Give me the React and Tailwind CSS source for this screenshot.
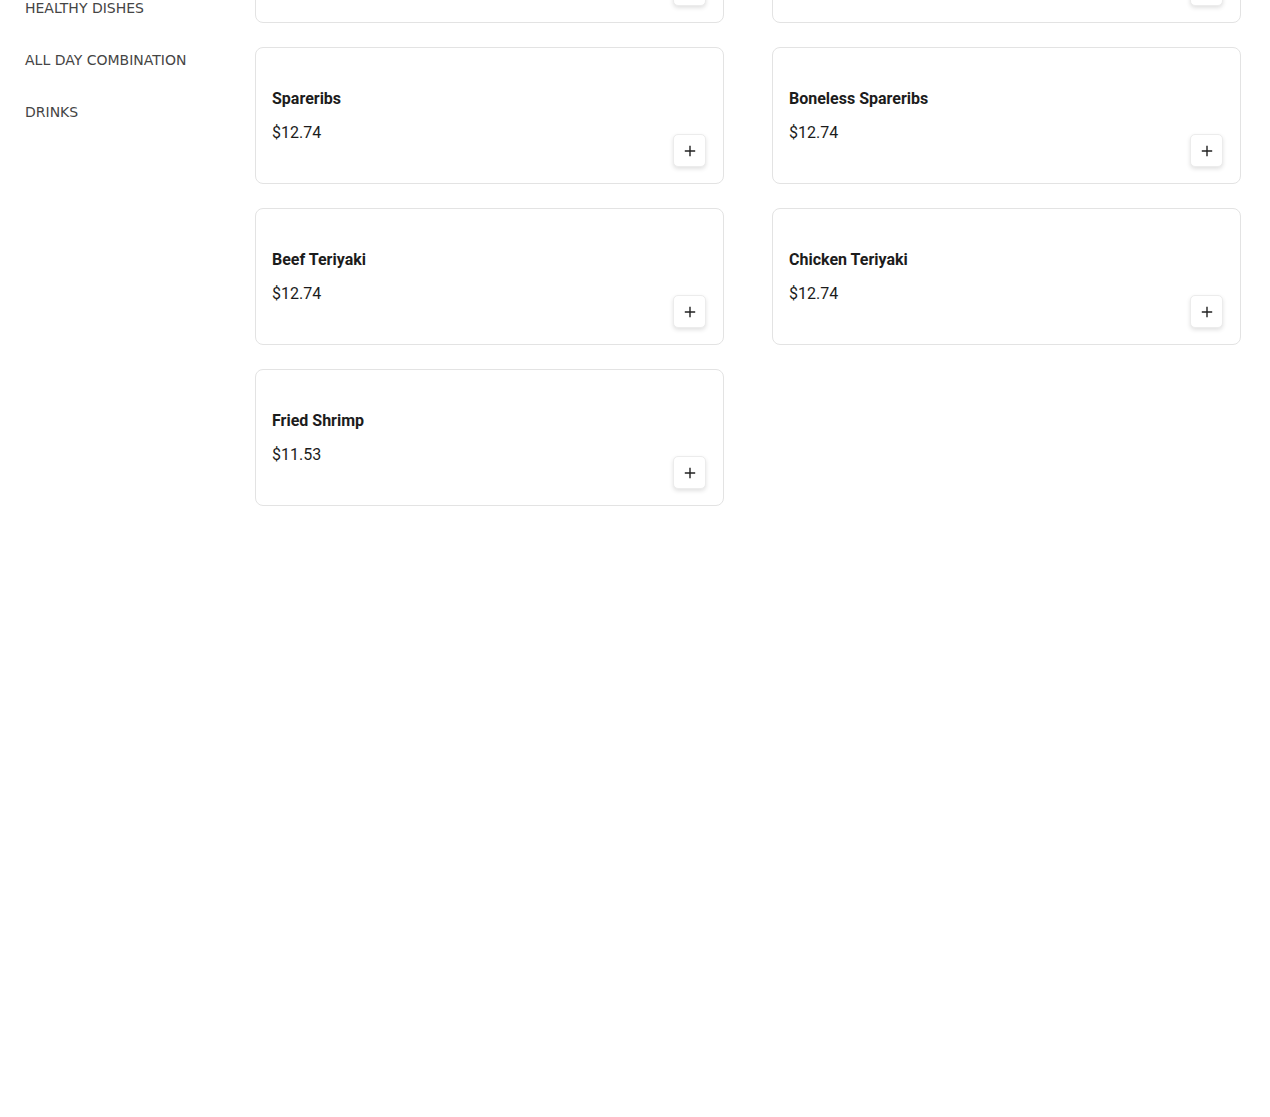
import React from "react";

const categories = ["HEALTHY DISHES", "ALL DAY COMBINATION", "DRINKS"];

const items = [
  { name: "Shrimp with Broccoli", price: "$12.74" },
  { name: "Chicken with Broccoli", price: "$12.74" },
  { name: "Spareribs", price: "$12.74" },
  { name: "Boneless Spareribs", price: "$12.74" },
  { name: "Beef Teriyaki", price: "$12.74" },
  { name: "Chicken Teriyaki", price: "$12.74" },
  { name: "Fried Shrimp", price: "$11.53" },
];

function PlusIcon() {
  return (
    <svg width="12" height="12" viewBox="0 0 12 12" fill="none" stroke="#222" strokeWidth="1.4" strokeLinecap="square">
      <path d="M6 1.5v9M1.5 6h9" />
    </svg>
  );
}

function ItemCard({ name, price }) {
  return (
    <div className="flex h-[137px] justify-between rounded-[8px] border border-[#e3e3e3] bg-white p-4">
      <div className="flex flex-col pt-[23px]">
        <div className="text-[16px] font-bold leading-6 text-[#1c1c1c]">{name}</div>
        <div className="mt-[10px] text-[16px] leading-6 text-[#1c1c1c]">{price}</div>
      </div>
      <button className="mr-px flex h-[33px] w-[33px] items-center justify-center self-end rounded-[5px] border border-[#ececec] bg-white shadow-[0_2px_4px_rgba(0,0,0,0.12)]">
        <PlusIcon />
      </button>
    </div>
  );
}

export default function App() {
  return (
    <div className="h-[1117px] overflow-hidden bg-white" style={{ fontFamily: "Roboto, 'Noto Sans', sans-serif" }}>
      <div className="flex">
        <aside className="w-[255px] shrink-0 pl-[25px]">
          <ul className="mt-[-18px]" style={{ fontFamily: "'DejaVu Sans', sans-serif" }}>
            {categories.map((c) => (
              <li key={c} className="py-[14px] text-[14px] leading-6 text-[#454545]">
                {c}
              </li>
            ))}
          </ul>
        </aside>
        <main className="mt-[-114px] grid w-[986px] grid-cols-2 content-start gap-x-[48px] gap-y-[24px]">
          {items.map((it) => (
            <ItemCard key={it.name} {...it} />
          ))}
        </main>
      </div>
    </div>
  );
}
